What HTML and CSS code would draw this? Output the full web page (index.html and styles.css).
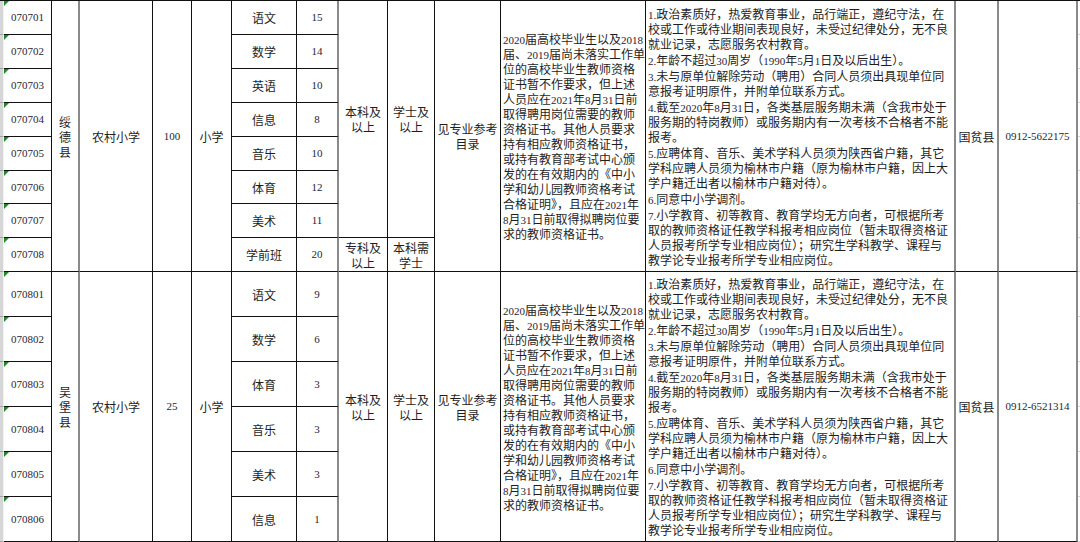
FILE: index.html
```html
<!DOCTYPE html>
<html lang="zh-CN">
<head>
<meta charset="utf-8">
<title>岗位表</title>
<link rel="stylesheet" href="styles.css">
</head>
<body>
<div class="sheet">
  <!-- section 1, row 1 -->
  <div class="rh"></div>
  <div class="c id"><span class="n">070701</span></div>
  <div class="c g s8 vt">绥<br>德<br>县</div>
  <div class="c s8">农村小学</div>
  <div class="c s8"><span class="n">100</span></div>
  <div class="c s8">小学</div>
  <div class="c">语文</div>
  <div class="c g"><span class="n">15</span></div>
  <div class="c s7">本科及<br>以上</div>
  <div class="c s7">学士及<br>以上</div>
  <div class="c s8">见专业参考<br>目录</div>
  <div class="c s8 t"><div><span class="n">2020</span>届高校毕业生以及<span class="n">2018</span><br>届、<span class="n">2019</span>届尚未落实工作单<br>位的高校毕业生教师资格<br>证书暂不作要求，但上述<br>人员应在<span class="n">2021</span>年<span class="n">8</span>月<span class="n">31</span>日前<br>取得聘用岗位需要的教师<br>资格证书。其他人员要求<br>持有相应教师资格证书，<br>或持有教育部考试中心颁<br>发的在有效期内的《中小<br>学和幼儿园教师资格考试<br>合格证明》，且应在<span class="n">2021</span>年<br><span class="n">8</span>月<span class="n">31</span>日前取得拟聘岗位要<br>求的教师资格证书。</div></div>
  <div class="c g s8 t r">
    <div>
      <p><span class="n">1.</span>政治素质好，热爱教育事业，品行端正，遵纪守法，在<br>校或工作或待业期间表现良好，未受过纪律处分，无不良<br>就业记录，志愿服务农村教育。</p>
      <p><span class="n">2.</span>年龄不超过<span class="n">30</span>周岁（<span class="n">1990</span>年<span class="n">5</span>月<span class="n">1</span>日及以后出生）。</p>
      <p><span class="n">3.</span>未与原单位解除劳动（聘用）合同人员须出具现单位同<br>意报考证明原件，并附单位联系方式。</p>
      <p><span class="n">4.</span>截至<span class="n">2020</span>年<span class="n">8</span>月<span class="n">31</span>日，各类基层服务期未满（含我市处于<br>服务期的特岗教师）或服务期内有一次考核不合格者不能<br>报考。</p>
      <p><span class="n">5.</span>应聘体育、音乐、美术学科人员须为陕西省户籍，其它<br>学科应聘人员须为榆林市户籍（原为榆林市户籍，因上大<br>学户籍迁出者以榆林市户籍对待）。</p>
      <p><span class="n">6.</span>同意中小学调剂。</p>
      <p><span class="n">7.</span>小学教育、初等教育、教育学均无方向者，可根据所考<br>取的教师资格证任教学科报考相应岗位（暂未取得资格证<br>人员报考所学专业相应岗位）；研究生学科教学、课程与<br>教学论专业报考所学专业相应岗位。</p>
    </div>
  </div>
  <div class="c g s8">国贫县</div>
  <div class="c g s8"><span class="n">0912-5622175</span></div>
  <div class="tr"></div>

  <div class="rh"></div><div class="c id"><span class="n">070702</span></div><div class="c">数学</div><div class="c g"><span class="n">14</span></div><div class="tr"></div>
  <div class="rh"></div><div class="c id"><span class="n">070703</span></div><div class="c">英语</div><div class="c g"><span class="n">10</span></div><div class="tr"></div>
  <div class="rh"></div><div class="c id"><span class="n">070704</span></div><div class="c">信息</div><div class="c g"><span class="n">8</span></div><div class="tr"></div>
  <div class="rh"></div><div class="c id"><span class="n">070705</span></div><div class="c">音乐</div><div class="c g"><span class="n">10</span></div><div class="tr"></div>
  <div class="rh"></div><div class="c id"><span class="n">070706</span></div><div class="c">体育</div><div class="c g"><span class="n">12</span></div><div class="tr"></div>
  <div class="rh"></div><div class="c id"><span class="n">070707</span></div><div class="c">美术</div><div class="c g"><span class="n">11</span></div><div class="tr"></div>
  <div class="rh"></div><div class="c id"><span class="n">070708</span></div><div class="c">学前班</div><div class="c g"><span class="n">20</span></div><div class="c">专科及<br>以上</div><div class="c">本科需<br>学士</div><div class="tr"></div>

  <!-- section 2 -->
  <div class="rh"></div>
  <div class="c id"><span class="n">070801</span></div>
  <div class="c g s6 vt">吴<br>堡<br>县</div>
  <div class="c s6">农村小学</div>
  <div class="c s6"><span class="n">25</span></div>
  <div class="c s6">小学</div>
  <div class="c">语文</div>
  <div class="c g"><span class="n">9</span></div>
  <div class="c s6">本科及<br>以上</div>
  <div class="c s6">学士及<br>以上</div>
  <div class="c s6">见专业参考<br>目录</div>
  <div class="c s6 t"><div><span class="n">2020</span>届高校毕业生以及<span class="n">2018</span><br>届、<span class="n">2019</span>届尚未落实工作单<br>位的高校毕业生教师资格<br>证书暂不作要求，但上述<br>人员应在<span class="n">2021</span>年<span class="n">8</span>月<span class="n">31</span>日前<br>取得聘用岗位需要的教师<br>资格证书。其他人员要求<br>持有相应教师资格证书，<br>或持有教育部考试中心颁<br>发的在有效期内的《中小<br>学和幼儿园教师资格考试<br>合格证明》，且应在<span class="n">2021</span>年<br><span class="n">8</span>月<span class="n">31</span>日前取得拟聘岗位要<br>求的教师资格证书。</div></div>
  <div class="c g s6 t r">
    <div>
      <p><span class="n">1.</span>政治素质好，热爱教育事业，品行端正，遵纪守法，在<br>校或工作或待业期间表现良好，未受过纪律处分，无不良<br>就业记录，志愿服务农村教育。</p>
      <p><span class="n">2.</span>年龄不超过<span class="n">30</span>周岁（<span class="n">1990</span>年<span class="n">5</span>月<span class="n">1</span>日及以后出生）。</p>
      <p><span class="n">3.</span>未与原单位解除劳动（聘用）合同人员须出具现单位同<br>意报考证明原件，并附单位联系方式。</p>
      <p><span class="n">4.</span>截至<span class="n">2020</span>年<span class="n">8</span>月<span class="n">31</span>日，各类基层服务期未满（含我市处于<br>服务期的特岗教师）或服务期内有一次考核不合格者不能<br>报考。</p>
      <p><span class="n">5.</span>应聘体育、音乐、美术学科人员须为陕西省户籍，其它<br>学科应聘人员须为榆林市户籍（原为榆林市户籍，因上大<br>学户籍迁出者以榆林市户籍对待）。</p>
      <p><span class="n">6.</span>同意中小学调剂。</p>
      <p><span class="n">7.</span>小学教育、初等教育、教育学均无方向者，可根据所考<br>取的教师资格证任教学科报考相应岗位（暂未取得资格证<br>人员报考所学专业相应岗位）；研究生学科教学、课程与<br>教学论专业报考所学专业相应岗位。</p>
    </div>
  </div>
  <div class="c g s6">国贫县</div>
  <div class="c g s6"><span class="n">0912-6521314</span></div>
  <div class="tr"></div>

  <div class="rh"></div><div class="c id"><span class="n">070802</span></div><div class="c">数学</div><div class="c g"><span class="n">6</span></div><div class="tr"></div>
  <div class="rh"></div><div class="c id"><span class="n">070803</span></div><div class="c">体育</div><div class="c g"><span class="n">3</span></div><div class="tr"></div>
  <div class="rh"></div><div class="c id"><span class="n">070804</span></div><div class="c">音乐</div><div class="c g"><span class="n">3</span></div><div class="tr"></div>
  <div class="rh"></div><div class="c id"><span class="n">070805</span></div><div class="c">美术</div><div class="c g"><span class="n">3</span></div><div class="tr"></div>
  <div class="rh"></div><div class="c id"><span class="n">070806</span></div><div class="c">信息</div><div class="c g"><span class="n">1</span></div><div class="tr"></div>
</div>
</body>
</html>
```
FILE: styles.css
```css
html, body {
  margin: 0;
  padding: 0;
  background: #ffffff;
}

body {
  width: 1080px;
  height: 542px;
  overflow: hidden;
  font-family: "Noto Sans CJK SC", "Noto Sans", sans-serif;
  font-size: 12px;
  color: #1e1e1e;
}

.sheet {
  display: grid;
  grid-template-columns: 4px 48px 28px 73px 39px 40px 65px 42px 49px 47px 66px 145px 310px 43px 79px 2px;
  grid-template-rows: 34px 34px 34px 34px 34px 33px 34px 34px 45px 45px 45px 45px 45px 45px;
  border-top: 1px solid #111111;
}

.rh {
  background: #d6d6d6;
  border-bottom: 1px solid #a4a4a4;
  border-right: 1px solid #f2f2f2;
}

.tr {
  border-bottom: 1px solid #d8d8d8;
}

.c {
  box-sizing: border-box;
  border-right: 1px solid #111111;
  border-bottom: 1px solid #111111;
  display: flex;
  align-items: center;
  justify-content: center;
  text-align: center;
  line-height: 15px;
  white-space: nowrap;
  min-width: 0;
}

.g {
  border-right: 2px solid #8a8a8a;
}

.s8 { grid-row: span 8; }
.s7 { grid-row: span 7; }
.s6 { grid-row: span 6; }

.vt {
  line-height: 15px;
}

.id {
  position: relative;
}

.id::before {
  content: "";
  position: absolute;
  top: 0;
  left: 0;
  width: 0;
  height: 0;
  border-top: 5px solid #23862b;
  border-right: 5px solid transparent;
}

.n {
  font-family: "Liberation Serif", "Times New Roman", serif;
  font-size: 11px;
  line-height: 1;
  color: #1f2535;
}

.t {
  justify-content: flex-start;
  text-align: left;
  padding-left: 2px;
  line-height: 15px;
}

.r {
  line-height: 15px;
}

.r p {
  margin: 0;
}

.r p + p {
  margin-top: 1px;
}
```
